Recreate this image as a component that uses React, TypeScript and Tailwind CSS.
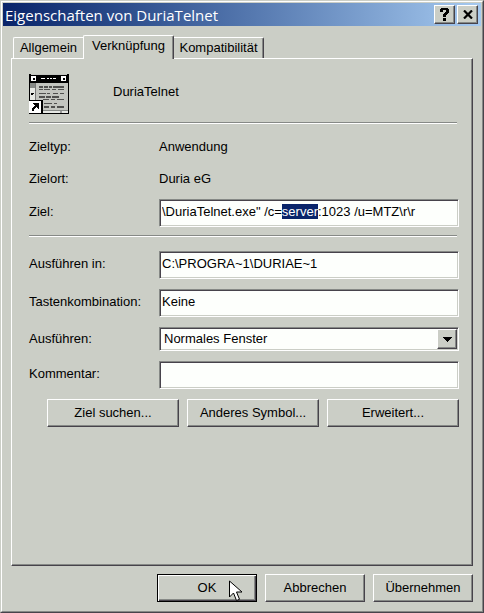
import React, { useEffect, useRef } from "react";
import clsx from "clsx";

const RAISED =
  "border border-t-white border-l-white border-b-[#47434b] border-r-[#47434b] shadow-[inset_-1px_-1px_0_#868986]";

const RAISED_DEFAULT =
  "border border-black shadow-[inset_1px_1px_0_#fff,inset_-1px_-1px_0_#47434b,inset_-2px_-2px_0_#868986]";

const SUNKEN =
  "w-full border border-t-[#868986] border-l-[#868986] border-b-white border-r-white bg-[#fdfffc] shadow-[inset_1px_1px_0_#47434b,inset_-1px_-1px_0_#cbcec6] outline-none";

// dark text lines inside the program icon: x, y, width, height
const ICON_LINES = [
  [10, 12, 4, 2],
  [15, 12, 4, 2],
  [20, 12, 3, 2],
  [24, 12, 11, 2],
  [10, 15, 4, 1],
  [15, 15, 6, 1],
  [23, 15, 4, 1],
  [29, 15, 6, 1],
  [10, 19, 7, 1],
  [18, 19, 3, 1],
  [24, 19, 5, 1],
  [31, 19, 4, 1],
  [10, 22, 6, 2],
  [17, 22, 5, 2],
  [23, 22, 7, 2],
  [14, 25, 6, 1],
  [22, 25, 4, 1],
  [28, 25, 7, 1],
  [15, 29, 8, 1],
  [25, 29, 3, 1],
  [15, 32, 5, 2],
  [22, 32, 4, 2],
  [28, 32, 7, 2],
];

function ProgramIcon() {
  return (
    <svg width="40" height="40" viewBox="0 0 40 40" shapeRendering="crispEdges">
      <rect width="40" height="40" fill="#000" />
      <rect x="1" y="9" width="38" height="30" fill="#c3c5c0" />
      <rect x="2" y="0" width="36" height="1" fill="#c3c5c0" />
      <rect x="2" y="2" width="5" height="5" fill="#fff" />
      <rect x="4" y="4" width="2" height="2" fill="#000" />
      <rect x="32" y="2" width="5" height="5" fill="#fff" />
      <rect x="34" y="4" width="2" height="2" fill="#000" />
      <path d="M12 4h4v1h-4zM18 4h2v1h-2zM21 4h2v1h-2zM24 4h3v1h-3z" fill="#fff" />
      <rect x="1" y="9" width="5" height="5" fill="#868986" />
      <rect x="6" y="9" width="1" height="17" fill="#777" />
      <rect x="1" y="14" width="5" height="12" fill="#e6e8e4" />
      <path d="M2 19h3v1h-1v1h-2z" fill="#000" />
      {ICON_LINES.map(([x, y, w, h], i) => (
        <rect key={i} x={x} y={y} width={w} height={h} fill="#50504f" />
      ))}
      <rect x="14" y="36" width="25" height="1" fill="#868986" />
      <rect x="14" y="37" width="25" height="2" fill="#e6e8e4" />
      <rect x="31" y="37" width="2" height="2" fill="#999" />
      <rect x="0" y="26" width="14" height="14" fill="#000" />
      <rect x="0" y="27" width="12" height="12" fill="#fff" />
      <path d="M4 29h6v6h-1v-1h-1v-1h-1v1h-1v1h-1v2h-2v-3h1v-1h1v-1h1v-1h-1v-1h-1z" fill="#000" />
    </svg>
  );
}

function MouseCursor() {
  return (
    <svg
      className="pointer-events-none absolute top-1.5 left-[72px]"
      width="14"
      height="22"
      viewBox="0 0 14 22"
    >
      <path
        d="M.5 1v16l4-4 3 7.500 3-1.200-3-7.300h5.500z"
        fill="#fff"
        stroke="#000"
      />
    </svg>
  );
}

function Separator() {
  return <hr className="mr-0.5 border-t border-b border-t-[#868986] border-b-white" />;
}

interface PushButtonProps {
  children: React.ReactNode;
  className?: string;
  isDefault?: boolean;
}

function PushButton({ children, className, isDefault }: PushButtonProps) {
  return (
    <button
      type="button"
      className={clsx("h-7 bg-[#cbcec6]", isDefault ? RAISED_DEFAULT : RAISED, className)}
    >
      {children}
    </button>
  );
}

interface TextRowProps {
  id: string;
  label: string;
  value: string;
  inputRef?: React.Ref<HTMLInputElement>;
}

function TextRow({ id, label, value, inputRef }: TextRowProps) {
  return (
    <div className="flex items-center">
      <label htmlFor={id} className="w-[130px] shrink-0 pb-0.5">
        {label}
      </label>
      <input
        id={id}
        ref={inputRef}
        type="text"
        defaultValue={value}
        spellCheck={false}
        className={clsx(
          "h-7 pt-0 pr-1 pb-1 pl-0.5 selection:bg-[#0a246a] selection:text-white",
          SUNKEN
        )}
      />
    </div>
  );
}

export default function App() {
  const targetRef = useRef<HTMLInputElement>(null);

  useEffect(() => {
    const el = targetRef.current;
    if (!el) return;
    const start = el.value.indexOf("server");
    el.focus();
    el.setSelectionRange(start, start + "server".length);
  }, []);

  return (
    <div className="flex min-h-screen flex-col border border-t-[#cbcec6] border-l-[#cbcec6] border-r-[#47434b] border-b-[#47434b] bg-[#cbcec6] font-['Liberation_Sans',Arial,sans-serif] text-[13px] leading-4 text-black">
      <div className="flex flex-1 flex-col border border-t-white border-l-white border-r-[#868986] border-b-[#868986] p-px">
        <header className="flex h-[23px] items-center gap-0.5 bg-linear-to-r from-[#0a246a] to-[#a6caf0] pr-[3px] pl-0.5">
          <h1 className="flex-1 font-['Open_Sans',sans-serif] text-[15px] text-white">
            Eigenschaften von DuriaTelnet
          </h1>
          <button
            type="button"
            aria-label="Hilfe"
            className={clsx("flex h-[19px] w-[21px] items-center justify-center bg-[#cbcec6]", RAISED)}
          >
            <svg width="9" height="13" viewBox="0 0 9 13" shapeRendering="crispEdges">
              <path
                d="M1 0h7v1h1v4h-1v1h-1v1h-1v2h-3v-3h1v-1h1v-1h1v-2h-3v2h-3v-3h1zM3 10h3v3h-3z"
                fill="#000"
              />
            </svg>
          </button>
          <button
            type="button"
            aria-label="Schließen"
            className={clsx("flex h-[19px] w-[21px] items-center justify-center bg-[#cbcec6]", RAISED)}
          >
            <svg width="10" height="9" viewBox="0 0 10 9">
              <path d="M1 0.500L9 8.500M9 0.500L1 8.500" stroke="#000" strokeWidth="2.200" />
            </svg>
          </button>
        </header>

        <main className="flex flex-1 flex-col px-2 pt-[9px] pb-2">
          <div role="tablist" className="flex items-end pl-0.5">
            <button
              type="button"
              role="tab"
              aria-selected="false"
              className="h-[21px] w-[70px] rounded-tl-xs border-t border-l border-white"
            >
              Allgemein
            </button>
            <button
              type="button"
              role="tab"
              aria-selected="true"
              className="relative -mb-px h-6 w-[91px] rounded-t-xs border-t border-r border-l border-white border-r-[#47434b] bg-[#cbcec6] pb-1 shadow-[inset_-1px_0_0_#868986]"
            >
              Verknüpfung
            </button>
            <button
              type="button"
              role="tab"
              aria-selected="false"
              className="h-[21px] w-[90px] rounded-tr-xs border-t border-r border-white border-r-[#47434b] shadow-[inset_-1px_0_0_#868986]"
            >
              Kompatibilität
            </button>
          </div>

          <section className={clsx("flex-1 pt-[15px] pr-[13px] pb-3 pl-[17px]", RAISED)}>
            <div className="flex gap-11 pb-2">
              <ProgramIcon />
              <span className="pt-2.5">DuriaTelnet</span>
            </div>
            <Separator />

            <dl className="grid grid-cols-[130px_1fr] gap-y-4 pt-[15px] pb-3">
              <dt>Zieltyp:</dt>
              <dd>Anwendung</dd>
              <dt>Zielort:</dt>
              <dd>Duria eG</dd>
            </dl>
            <TextRow
              id="target"
              label="Ziel:"
              value={'\\DuriaTelnet.exe" /c=server:1023 /u=MTZ\\r\\r'}
              inputRef={targetRef}
            />
            <div className="pt-2 pb-3.5">
              <Separator />
            </div>

            <div className="flex flex-col gap-2.5">
              <TextRow id="workdir" label="Ausführen in:" value="C:\PROGRA~1\DURIAE~1" />
              <TextRow id="hotkey" label="Tastenkombination:" value="Keine" />
              <div className="flex items-center">
                <label htmlFor="run" className="w-[130px] shrink-0">
                  Ausführen:
                </label>
                <div className="relative flex-1">
                  <select id="run" className={clsx("block h-6 appearance-none pl-1", SUNKEN)}>
                    <option>Normales Fenster</option>
                  </select>
                  <span
                    className={clsx(
                      "pointer-events-none absolute top-0.5 right-0.5 flex h-5 w-5 items-center justify-center bg-[#cbcec6]",
                      RAISED
                    )}
                  >
                    <svg width="9" height="5" viewBox="0 0 9 5" shapeRendering="crispEdges">
                      <path d="M0 0h9v1h-1v1h-1v1h-1v1h-1v1h-1v-1h-1v-1h-1v-1h-1v-1h-1z" />
                    </svg>
                  </span>
                </div>
              </div>
              <TextRow id="comment" label="Kommentar:" value="" />
            </div>

            <div className="grid grid-cols-3 gap-2 pt-2.5 pl-[18px]">
              <PushButton>Ziel suchen...</PushButton>
              <PushButton>Anderes Symbol...</PushButton>
              <PushButton>Erweitert...</PushButton>
            </div>
          </section>

          <footer className="flex justify-end gap-2 pt-2">
            <div className="relative flex">
              <PushButton isDefault className="w-[100px]">
                OK
              </PushButton>
              <MouseCursor />
            </div>
            <PushButton className="w-[100px]">Abbrechen</PushButton>
            <PushButton className="w-[100px]">Übernehmen</PushButton>
          </footer>
        </main>
      </div>
    </div>
  );
}
